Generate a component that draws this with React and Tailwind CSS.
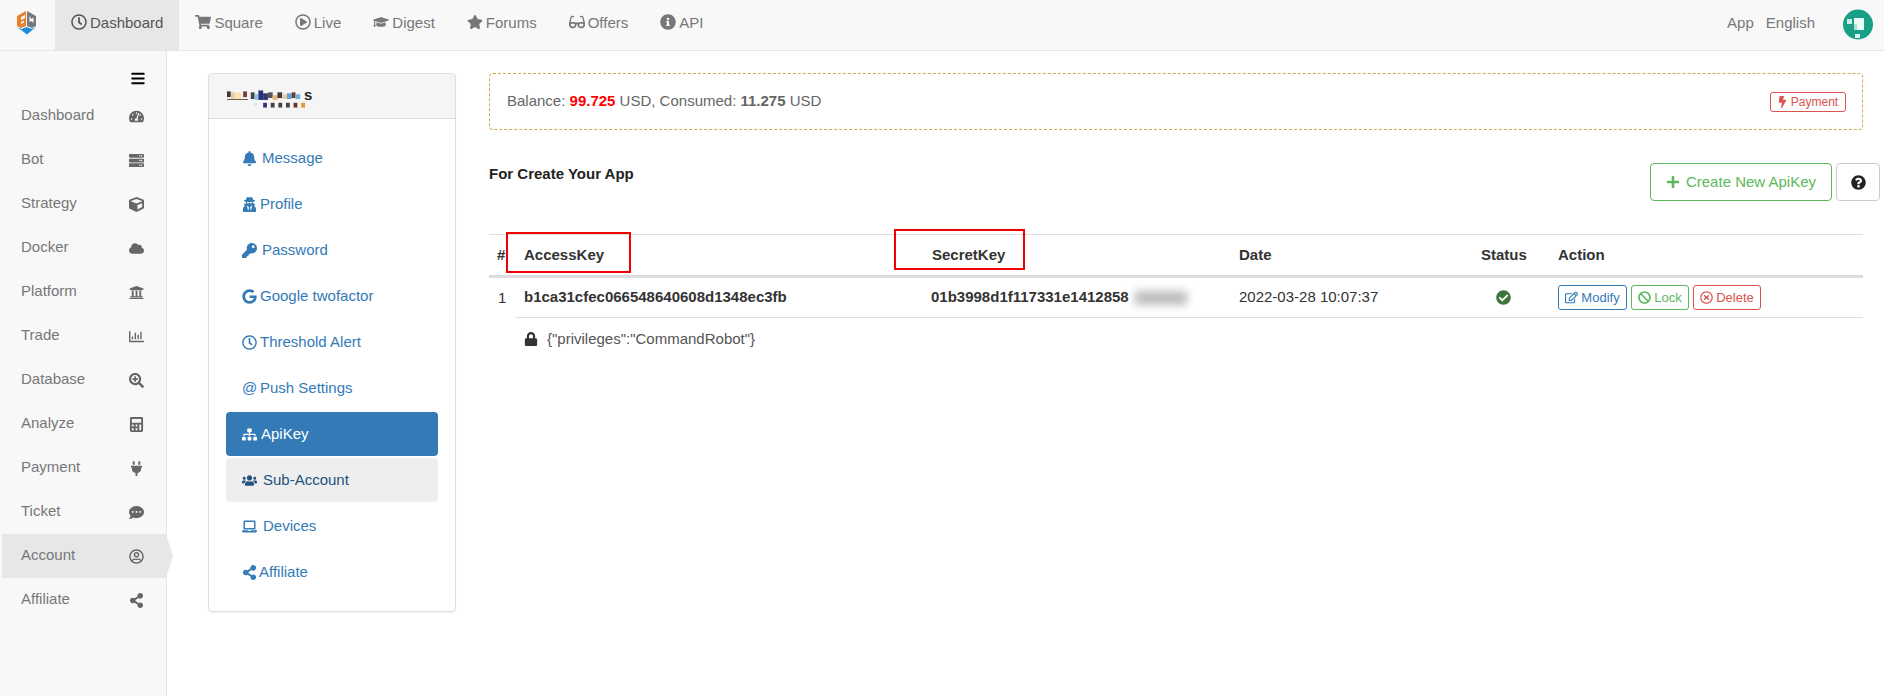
import {
  FaBars, FaBell, FaBan, FaBolt, FaCalculator, FaCheckCircle, FaCloud, FaCommentDots, FaCube,
  FaGlasses, FaGoogle, FaGraduationCap, FaInfoCircle, FaKey, FaLaptop, FaLock, FaPlug, FaPlus,
  FaQuestionCircle, FaRegChartBar, FaRegClock, FaRegEdit, FaRegPlayCircle, FaRegTimesCircle,
  FaRegUserCircle, FaSearchPlus, FaServer, FaShareAlt, FaShoppingCart, FaSitemap, FaStar,
  FaTachometerAlt, FaUniversity, FaUsers, FaUserSecret,
} from "react-icons/fa";

const topNav = [
  { label: "Dashboard", icon: FaRegClock, active: true },
  { label: "Square", icon: FaShoppingCart },
  { label: "Live", icon: FaRegPlayCircle },
  { label: "Digest", icon: FaGraduationCap },
  { label: "Forums", icon: FaStar },
  { label: "Offers", icon: FaGlasses },
  { label: "API", icon: FaInfoCircle },
];

const sideNav = [
  { label: "Dashboard", icon: FaTachometerAlt },
  { label: "Bot", icon: FaServer },
  { label: "Strategy", icon: FaCube },
  { label: "Docker", icon: FaCloud },
  { label: "Platform", icon: FaUniversity },
  { label: "Trade", icon: FaRegChartBar },
  { label: "Database", icon: FaSearchPlus },
  { label: "Analyze", icon: FaCalculator },
  { label: "Payment", icon: FaPlug },
  { label: "Ticket", icon: FaCommentDots },
  { label: "Account", icon: FaRegUserCircle, active: true },
  { label: "Affiliate", icon: FaShareAlt },
];

const pills = [
  { label: "Message", icon: FaBell, box: "w-[20px]" },
  { label: "Profile", icon: FaUserSecret, box: "w-[18px]" },
  { label: "Password", icon: FaKey, box: "w-[20px]" },
  { label: "Google twofactor", icon: FaGoogle, box: "w-[18px]" },
  { label: "Threshold Alert", icon: FaRegClock, box: "w-[18px]" },
  { label: "Push Settings", at: true, box: "w-[18px]" },
  { label: "ApiKey", icon: FaSitemap, box: "w-[19px]", state: "active" },
  { label: "Sub-Account", icon: FaUsers, box: "w-[21px]", state: "hover" },
  { label: "Devices", icon: FaLaptop, box: "w-[21px]" },
  { label: "Affiliate", icon: FaShareAlt, box: "w-[17px]" },
];

// pixelated account name in the card header
const mosaic = [
  [0, 1, 4, 6, "#3a3a3a"], [4, 2, 4, 7, "#e8c9a0"], [8, 2, 7, 7, "#f7e3b5"], [17, 1, 4, 6, "#7a3b3b"],
  [25, 2, 4, 7, "#444444"], [29, 4, 4, 6, "#8cc4e8"], [33, 0, 5, 10, "#2b2f7d"], [38, 3, 5, 7, "#2b3a66"],
  [43, 2, 5, 6, "#555555"], [48, 5, 5, 5, "#eab77a"], [53, 2, 5, 6, "#3d3d3d"], [58, 4, 5, 5, "#f2cf9e"],
  [63, 3, 5, 6, "#5aa5da"], [68, 2, 4, 6, "#6e3a3a"], [72, 4, 5, 5, "#6fb5e0"],
  [0, 9, 22, 1, "#6b5a3a"], [28, 13, 4, 3, "#c8f0f5"], [38, 13, 4, 5, "#35357a"], [46, 13, 4, 5, "#444444"],
  [54, 13, 4, 5, "#444444"], [62, 13, 4, 5, "#444444"], [70, 13, 4, 5, "#7a2f35"], [78, 13, 4, 5, "#e09a3a"],
];

function Logo() {
  return (
    <svg width="22" height="24" viewBox="0 0 22 24">
      <polygon points="1,5 10,0 10,15 5,17 1,15" fill="#e8812b" />
      <polygon points="5,6 9,4 9,6.5 5,8.5 M5,9 8,8" fill="#f8f8f8" />
      <polygon points="5,7 9,5 9,7 5,9" fill="#f8f8f8" />
      <polygon points="5,11 8,9.5 8,11.5 5,13" fill="#f8f8f8" />
      <polygon points="11,0 20,5 20,15 16,17 11,15" fill="#77797c" />
      <polygon points="13.5,5 15.5,8 17.5,6.5 17.5,12 15.5,10 13.5,11" fill="#f8f8f8" />
      <polygon points="1,16 5.5,18 10.5,16 16,18 20,16 11,23.5" fill="#1f8fd8" />
    </svg>
  );
}

function Avatar() {
  return (
    <svg width="30" height="31" viewBox="0 0 30 31">
      <circle cx="15" cy="15.5" r="15" fill="#17a085" />
      <rect x="4" y="10" width="5" height="5" fill="#c9eee5" />
      <rect x="11" y="9" width="10" height="6" fill="#eafaf6" />
      <rect x="14" y="15" width="7" height="6" fill="#eafaf6" />
      <rect x="11" y="15" width="3" height="6" fill="#a6e2d5" />
      <rect x="12" y="25" width="5" height="4" fill="#d9f4ee" />
    </svg>
  );
}

function TopBar() {
  return (
    <header className="flex h-[51px] shrink-0 items-stretch border-b border-[#e7e7e7] bg-[#f8f8f8] text-[15px] text-[#777]">
      <div className="flex w-[55px] items-start justify-center pt-[11px] pr-[1px]">
        <Logo />
      </div>
      {topNav.map(({ label, icon: Icon, active }) => (
        <a
          key={label}
          className={`flex items-center gap-[3px] px-4 pb-[4px] ${active ? "bg-[#e7e7e7] text-[#555]" : ""}`}
        >
          <Icon className="h-[16px] w-[16px] -translate-y-[1px]" />
          {label}
        </a>
      ))}
      <div className="ml-auto flex items-center pr-[11px]">
        <span className="pb-[4px]">App</span>
        <span className="ml-[12px] pb-[4px]">English</span>
        <div className="ml-[28px] pb-[1px]">
          <Avatar />
        </div>
      </div>
    </header>
  );
}

function SideBar() {
  return (
    <aside className="w-[167px] shrink-0 border-r border-[#e7e7e7] bg-[#f8f8f8] text-[15px] text-[#777]">
      <div className="flex h-[43px] items-start justify-end pt-[20px] pr-[21px] text-black">
        <FaBars className="h-[15px] w-[14px]" />
      </div>
      {sideNav.map(({ label, icon: Icon, active }) => (
        <a
          key={label}
          className={`relative ml-[2px] flex h-[44px] items-center justify-between pr-[21px] pl-[19px] ${active ? "bg-[#e7e7e7]" : ""}`}
        >
          <span className="pb-[1px]">{label}</span>
          <span className="flex w-[18px] justify-center text-[#666]">
            <Icon className="h-[15px] w-[15px]" />
          </span>
          {active && (
            <span className="absolute top-0 -right-[7px] border-y-[22px] border-l-[7px] border-y-transparent border-l-[#e7e7e7]" />
          )}
        </a>
      ))}
    </aside>
  );
}

function AccountCard() {
  return (
    <section className="h-[539px] w-[248px] shrink-0 rounded border border-[#ddd] shadow-[0_1px_1px_rgba(0,0,0,0.05)]">
      <div className="flex h-[45px] items-start rounded-t border-b border-[#ddd] bg-[#f5f5f5] pt-[16px] pl-[18px] text-[15px] font-bold leading-[18px] text-[#222]">
        <svg width="78" height="18" viewBox="0 0 82 18">
          {mosaic.map(([x, y, w, h, fill], i) => (
            <rect key={i} x={x} y={y} width={w} height={h} fill={fill} />
          ))}
        </svg>
        <span className="-ml-[1px] -mt-[4px]">s</span>
      </div>
      <ul className="flex flex-col gap-[2px] px-[17px] pt-[17px] text-[15px]">
        {pills.map(({ label, icon: Icon, at, box, state }) => (
          <li
            key={label}
            className={`flex h-[44px] items-center rounded pl-[16px] ${
              state === "active"
                ? "bg-[#337ab7] text-white"
                : state === "hover"
                  ? "bg-[#eeeeee] text-[#23527c]"
                  : "text-[#337ab7]"
            }`}
          >
            <span className={`flex shrink-0 items-center ${box}`}>
              {at ? "@" : <Icon className="h-[15px] w-[15px]" />}
            </span>
            {label}
          </li>
        ))}
      </ul>
    </section>
  );
}

function BalanceBar() {
  return (
    <div className="flex h-[57px] items-center justify-between rounded border border-dashed border-[#cfa84f] pr-[16px] pl-[17px] text-[15px] text-[#666]">
      <span>
        Balance: <b className="text-[#ff0000]">99.725</b> USD, Consumed: <b>11.275</b> USD
      </span>
      <a className="flex h-[20px] w-[76px] items-center justify-center gap-[4px] rounded-[3px] border border-[#d9534f] text-[12px] text-[#d9534f]">
        <FaBolt className="h-[12px] w-[9px]" />
        Payment
      </a>
    </div>
  );
}

function SmallButton({ icon: Icon, label, tone, width }) {
  return (
    <a className={`flex h-[25px] items-center justify-center gap-[3px] rounded-[3px] border text-[13px] ${tone} ${width}`}>
      <Icon className="h-[13px] w-[13px]" />
      {label}
    </a>
  );
}

function KeyTable() {
  return (
    <table className="mt-[33px] w-full table-fixed border-collapse border-t border-[#ddd] text-[15px] text-[#333]">
      <colgroup>
        <col className="w-[27px]" />
        <col className="w-[408px]" />
        <col className="w-[307px]" />
        <col className="w-[242px]" />
        <col className="w-[77px]" />
        <col />
      </colgroup>
      <thead>
        <tr className="h-[42px] border-b-[3px] border-[#ddd] text-left">
          <th className="pl-2 font-bold">#</th>
          <th className="pl-2 font-bold">AccessKey</th>
          <th className="pl-2 font-bold">SecretKey</th>
          <th className="pl-2 font-bold">Date</th>
          <th className="pl-2 font-bold">Status</th>
          <th className="pl-2 font-bold">Action</th>
        </tr>
      </thead>
      <tbody>
        <tr className="h-[41px] border-b border-[#ddd]">
          <td rowSpan={2} className="pt-[9px] pl-[9px] align-top">1</td>
          <td className="pl-2 font-bold">b1ca31cfec066548640608d1348ec3fb</td>
          <td className="pl-[7px] font-bold">
            <span className="flex items-center">
              01b3998d1f117331e1412858
              <span className="ml-[6px] h-[14px] w-[52px] bg-[#bdbdbd] blur-[4px]" />
            </span>
          </td>
          <td className="pl-2">2022-03-28 10:07:37</td>
          <td className="pr-[24px] pl-2">
            <FaCheckCircle className="mx-auto h-[15px] w-[15px] text-[#3c763d]" />
          </td>
          <td className="pl-2">
            <div className="flex gap-[4px]">
              <SmallButton icon={FaRegEdit} label="Modify" tone="border-[#337ab7] text-[#337ab7]" width="w-[69px]" />
              <SmallButton icon={FaBan} label="Lock" tone="border-[#5cb85c] text-[#5cb85c]" width="w-[58px]" />
              <SmallButton icon={FaRegTimesCircle} label="Delete" tone="border-[#d9534f] text-[#d9534f]" width="w-[68px]" />
            </div>
          </td>
        </tr>
        <tr>
          <td colSpan={5} className="h-[42px] pl-2 text-[#555]">
            <span className="flex items-center gap-[9px]">
              <FaLock className="h-[14px] w-[14px] text-[#333]" />
              {'{"privileges":"CommandRobot"}'}
            </span>
          </td>
        </tr>
      </tbody>
    </table>
  );
}

export default function App() {
  return (
    <div className="flex h-[696px] w-full flex-col overflow-hidden bg-white font-['Liberation_Sans',Arial,sans-serif]">
      <TopBar />
      <div className="flex min-h-0 flex-1">
        <SideBar />
        <main className="flex flex-1 items-start pt-[22px] pl-[41px]">
          <AccountCard />
          <div className="relative ml-[33px] w-[1374px] shrink-0">
            <BalanceBar />
            <div className="mt-[33px] flex items-start justify-between">
              <h3 className="pt-[1px] text-[15px] leading-5 font-bold text-[#222]">For Create Your App</h3>
              <div className="-mr-[17px] flex gap-[4px]">
                <a className="flex h-[38px] w-[182px] items-center justify-center gap-[6px] rounded border border-[#5cb85c] text-[15px] text-[#5cb85c]">
                  <FaPlus className="h-[14px] w-[14px]" />
                  Create New ApiKey
                </a>
                <a className="flex h-[38px] w-[44px] items-center justify-center rounded border border-[#ccc] text-[#222]">
                  <FaQuestionCircle className="h-[15px] w-[15px]" />
                </a>
              </div>
            </div>
            <KeyTable />
            {/* red annotation boxes drawn over the table */}
            <div className="absolute top-[159px] left-[17px] h-[41px] w-[125px] border-2 border-[#f00000]" />
            <div className="absolute top-[156px] left-[405px] h-[41px] w-[131px] border-2 border-[#f00000]" />
          </div>
        </main>
      </div>
    </div>
  );
}
